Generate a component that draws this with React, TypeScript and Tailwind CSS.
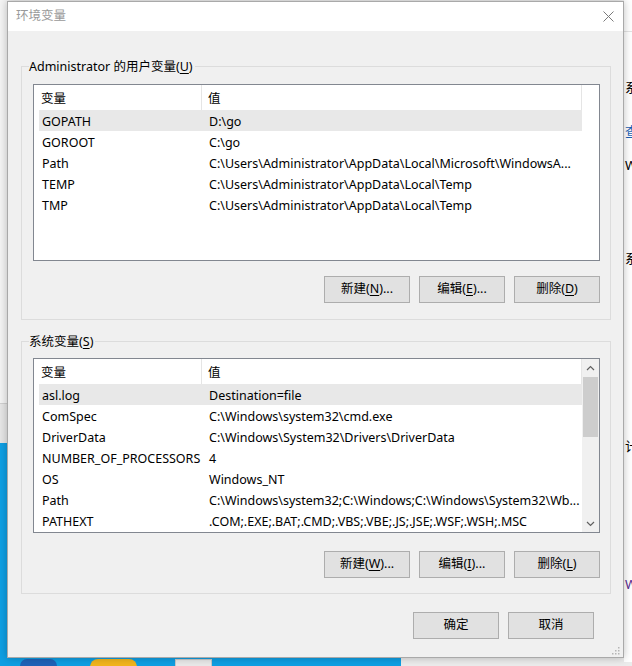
import type { ReactNode } from 'react'

type EnvVar = { name: string; value: string }

const userVars: EnvVar[] = [
  { name: 'GOPATH', value: 'D:\\go' },
  { name: 'GOROOT', value: 'C:\\go' },
  { name: 'Path', value: 'C:\\Users\\Administrator\\AppData\\Local\\Microsoft\\WindowsA...' },
  { name: 'TEMP', value: 'C:\\Users\\Administrator\\AppData\\Local\\Temp' },
  { name: 'TMP', value: 'C:\\Users\\Administrator\\AppData\\Local\\Temp' },
]

const systemVars: EnvVar[] = [
  { name: 'asl.log', value: 'Destination=file' },
  { name: 'ComSpec', value: 'C:\\Windows\\system32\\cmd.exe' },
  { name: 'DriverData', value: 'C:\\Windows\\System32\\Drivers\\DriverData' },
  { name: 'NUMBER_OF_PROCESSORS', value: '4' },
  { name: 'OS', value: 'Windows_NT' },
  { name: 'Path', value: 'C:\\Windows\\system32;C:\\Windows;C:\\Windows\\System32\\Wb...' },
  { name: 'PATHEXT', value: '.COM;.EXE;.BAT;.CMD;.VBS;.VBE;.JS;.JSE;.WSF;.WSH;.MSC' },
]

function Key({ children }: { children: ReactNode }) {
  return <span className="underline underline-offset-2">{children}</span>
}

function WinButton({ children }: { children: ReactNode }) {
  return (
    <button className="w-[86px] h-[27px] bg-[#e1e1e1] border border-[#adadad] text-[12.5px] text-black flex items-center justify-center">
      {children}
    </button>
  )
}

function Chevron({ up }: { up?: boolean }) {
  return (
    <svg width="9" height="6" viewBox="0 0 9 6">
      <polyline
        points={up ? '1,5 4.5,1.5 8,5' : '1,1 4.5,4.5 8,1'}
        fill="none"
        stroke="#606060"
        strokeWidth="1.2"
      />
    </svg>
  )
}

function ScrollBar() {
  return (
    <div className="w-[17px] bg-[#f0f0f0] flex flex-col">
      <div className="h-[18px] flex items-center justify-center">
        <Chevron up />
      </div>
      <div className="flex-1 flex flex-col">
        <div className="h-[60px] mx-[1px] bg-[#cdcdcd]" />
      </div>
      <div className="h-[17px] flex items-center justify-center">
        <Chevron />
      </div>
    </div>
  )
}

function VarList({ rows, scroll, height }: { rows: EnvVar[]; scroll?: boolean; height: string }) {
  return (
    <div className={`flex border border-[#828790] bg-white ${height}`}>
      <div className="flex-1 flex flex-col">
        <div className="flex h-[25px] shrink-0">
          <div className="w-[168px] pl-[7px] pt-[3px] flex items-center border-r border-[#e5e5e5]">变量</div>
          <div className="flex-1 pl-[6px] pt-[3px] flex items-center border-r border-[#e5e5e5]">值</div>
        </div>
        {rows.map((r, i) => (
          <div
            key={r.name + i}
            className={`flex h-[21px] shrink-0 items-center ml-[5px] pt-[3px] ${i === 0 ? 'bg-[#e8e8e8]' : ''}`}
          >
            <div className="w-[163px] pl-[3px] whitespace-nowrap">{r.name}</div>
            <div className="flex-1 pl-[7px] whitespace-nowrap overflow-hidden">{r.value}</div>
          </div>
        ))}
      </div>
      {scroll ? <ScrollBar /> : <div className="w-[17px]" />}
    </div>
  )
}

function GroupBox({ label, children }: { label: ReactNode; children: ReactNode }) {
  return (
    <fieldset className="ml-[13px] mr-[12px] border border-[#dcdcdc] p-0">
      <legend className="ml-[7px] pr-[2px] leading-[16px]">
        <span className="relative top-[1px]">{label}</span>
      </legend>
      <div className="pl-[11px] pr-[10px]">{children}</div>
    </fieldset>
  )
}

export default function App() {
  return (
    <div className="relative w-[632px] h-[666px] overflow-hidden bg-[#f0f0f0] text-[12.5px] text-black font-['Noto_Sans','Noto_Sans_CJK_SC',sans-serif]">
      {/* desktop strip on the left */}
      <div className="absolute left-0 top-0 w-[8px] h-[666px] flex flex-col">
        <div className="h-[403px] bg-[#f4f4f4]" />
        <div className="h-[40px] bg-[#e6e6e6] border-t border-[#d0d0d0]" />
        <div className="flex-1 bg-[#0f9fe3]" />
      </div>

      {/* taskbar edge under the dialog */}
      <div className="absolute left-0 top-[657px] w-[632px] h-[9px] flex">
        <div className="w-[401px] bg-[#0f9fe3] flex items-start pt-[2px]">
          <div className="ml-[20px] w-[37px] h-[14px] rounded-full bg-[#1f62b8]" />
          <div className="ml-[33px] w-[47px] h-[16px] rounded-full bg-[#f2b51c]" />
          <div className="ml-[38px] w-[37px] h-[8px] bg-[#e9e9e9] border border-[#c8c8c8]" />
        </div>
        <div className="flex-1 bg-[#ececec]" />
      </div>

      {/* window behind, on the right */}
      <div className="absolute left-[624px] top-0 w-[8px] h-[662px] bg-white overflow-hidden">
        <div className="h-[32px] border-b border-[#e3e3e3]" />
        <div className="flex flex-col pt-[47px] pl-[1px] text-[13px] leading-[16px]">
          <span>系</span>
          <span className="mt-[28px] text-[#1a5fb4]">查</span>
          <span className="mt-[18px]">W</span>
          <span className="mt-[77px]">系</span>
          <span className="mt-[172px]">计</span>
          <span className="mt-[122px] text-[#5b2d90]">W</span>
        </div>
      </div>

      {/* dialog */}
      <div className="absolute left-[7px] top-[1px] w-[617px] h-[657px] border border-[#a9a9a9] bg-[#f0f0f0] flex flex-col shadow-[0_0_8px_rgba(0,0,0,0.25)]">
        <div className="h-[29px] bg-white flex items-center justify-between pl-[8px] pr-[9px] shrink-0">
          <span className="text-[#999999]">环境变量</span>
          <svg width="11" height="11" viewBox="0 0 11 11">
            <path d="M0.5 0.5 L10.5 10.5 M10.5 0.5 L0.5 10.5" stroke="#7a7a7a" strokeWidth="1" />
          </svg>
        </div>

        <div className="flex flex-col pt-[27px]">
          <GroupBox
            label={
              <>
                Administrator 的用户变量(<Key>U</Key>)
              </>
            }
          >
            <div className="mt-[10px]">
              <VarList rows={userVars} height="h-[177px]" />
            </div>
            <div className="flex justify-end gap-[9px] mt-[15px] mb-[16px]">
              <WinButton>
                新建(<Key>N</Key>)...
              </WinButton>
              <WinButton>
                编辑(<Key>E</Key>)...
              </WinButton>
              <WinButton>
                删除(<Key>D</Key>)
              </WinButton>
            </div>
          </GroupBox>

          <div className="mt-[13px]">
            <GroupBox
              label={
                <>
                  系统变量(<Key>S</Key>)
                </>
              }
            >
              <div className="mt-[9px]">
                <VarList rows={systemVars} scroll height="h-[175px]" />
              </div>
              <div className="flex justify-end gap-[9px] mt-[18px] mb-[15px]">
                <WinButton>
                  新建(<Key>W</Key>)...
                </WinButton>
                <WinButton>
                  编辑(<Key>I</Key>)...
                </WinButton>
                <WinButton>
                  删除(<Key>L</Key>)
                </WinButton>
              </div>
            </GroupBox>
          </div>

          <div className="flex justify-end gap-[9px] mt-[18px] pr-[29px]">
            <WinButton>确定</WinButton>
            <WinButton>取消</WinButton>
          </div>
        </div>

        {/* size grip */}
        <svg className="absolute right-[3px] bottom-[2px]" width="8" height="8" viewBox="0 0 8 8">
          <rect x="6" y="0" width="1.5" height="1.5" fill="#b5b5b5" />
          <rect x="3" y="3" width="1.5" height="1.5" fill="#b5b5b5" />
          <rect x="6" y="3" width="1.5" height="1.5" fill="#b5b5b5" />
          <rect x="0" y="6" width="1.5" height="1.5" fill="#b5b5b5" />
          <rect x="3" y="6" width="1.5" height="1.5" fill="#b5b5b5" />
          <rect x="6" y="6" width="1.5" height="1.5" fill="#b5b5b5" />
        </svg>
      </div>
    </div>
  )
}
